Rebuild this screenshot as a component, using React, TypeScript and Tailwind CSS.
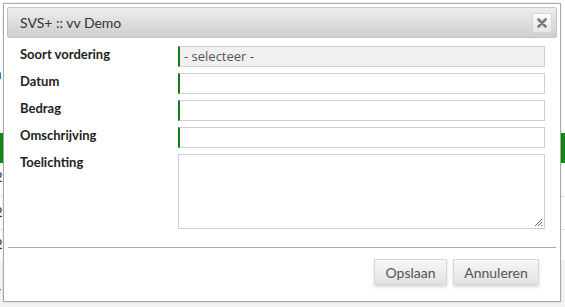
import React from 'react'

const fields = ['Soort vordering', 'Datum', 'Bedrag', 'Omschrijving']

export default function App() {
  return (
    <div className="relative w-[565px] h-[307px] overflow-hidden bg-white" style={{ fontFamily: 'Lato, "Open Sans", sans-serif' }}>
      {/* Page behind the dialog */}
      <div className="flex flex-col">
        <div className="h-[64px]" />
        <div className="h-[18px] text-[15px] font-bold text-[#1f2a44] leading-[18px] -ml-[7px]">n</div>
        <div className="h-[51px]" />
        <div className="h-[30px] bg-[#138a13]" />
        <div className="h-[34px] border-b border-[#e2e2e2] text-[13px] text-[#333] leading-[28px] -ml-[5px]">2</div>
        <div className="h-[33px] border-b border-[#e2e2e2] text-[13px] text-[#333] leading-[30px] -ml-[5px]">2</div>
        <div className="h-[30px] text-[13px] text-[#333] leading-[28px] -ml-[5px]">2</div>
        <div className="h-[47px] bg-[#f3f3f3] text-[13px] text-[#333] leading-[62px] -ml-[4px]">r</div>
      </div>

      {/* Dialog */}
      <div className="absolute left-[3px] top-[3px] w-[558px] h-[299px] bg-white border border-[#a9a9a9] p-[3px] flex flex-col shadow-[0_0_2px_rgba(0,0,0,0.15)]">
        <div className="h-[31px] flex items-center justify-between px-[12px] border border-[#c4c4c4] rounded-[2px] bg-gradient-to-b from-[#ededed] to-[#cfcfcf]">
          <span className="text-[14px] text-[#333]">SVS+ :: vv Demo</span>
          <button className="w-[20px] h-[20px] -mr-[8px] flex items-center justify-center border border-[#d6d6d6] bg-gradient-to-b from-[#fbfbfb] to-[#e6e6e6]">
            <svg width="10" height="10" viewBox="0 0 10 10">
              <path d="M1.5 1.5 L8.5 8.5 M8.5 1.5 L1.5 8.5" stroke="#7a7a7a" strokeWidth="2.6" strokeLinecap="round" />
            </svg>
          </button>
        </div>

        <div className="grid grid-cols-[158px_367px] gap-y-[6px] pl-[13px] pt-[8px]">
          {fields.map((f, i) => (
            <React.Fragment key={f}>
              <div className="text-[13px] font-bold text-[#222] leading-[17px]">{f}</div>
              {i === 0 ? (
                <div className="h-[21px] border border-[#cfcfcf] border-l-2 border-l-[#127c12] bg-[#f0f0f0] text-[13px] text-[#555] pl-[4px] leading-[19px]" style={{ fontFamily: '"Open Sans", sans-serif' }}>
                  - selecteer -
                </div>
              ) : (
                <div className="h-[21px] border border-[#cfcfcf] border-l-2 border-l-[#127c12] bg-white" />
              )}
            </React.Fragment>
          ))}
          <div className="text-[13px] font-bold text-[#222] leading-[17px]">Toelichting</div>
          <div className="relative h-[75px] border border-[#cfcfcf] bg-white">
            <svg className="absolute right-[1px] bottom-[1px]" width="10" height="10" viewBox="0 0 10 10">
              <path d="M9 2 L2 9 M9 5 L5 9 M9 8 L8 9" stroke="#666" strokeWidth="1" />
            </svg>
          </div>
        </div>

        <div className="mt-[18px] mx-[1px] border-t border-[#a8a8a8] flex justify-end gap-[6px] pt-[11px] pr-[17px]">
          <button className="w-[73px] h-[26px] border border-[#d8d8d8] bg-gradient-to-b from-[#f7f7f7] to-[#e2e2e2] text-[14px] text-[#555] shadow-[0_2px_3px_rgba(0,0,0,0.15)]">
            Opslaan
          </button>
          <button className="w-[86px] h-[26px] border border-[#d8d8d8] bg-gradient-to-b from-[#f7f7f7] to-[#e2e2e2] text-[14px] text-[#555] shadow-[0_2px_3px_rgba(0,0,0,0.15)]">
            Annuleren
          </button>
        </div>
      </div>
    </div>
  )
}
